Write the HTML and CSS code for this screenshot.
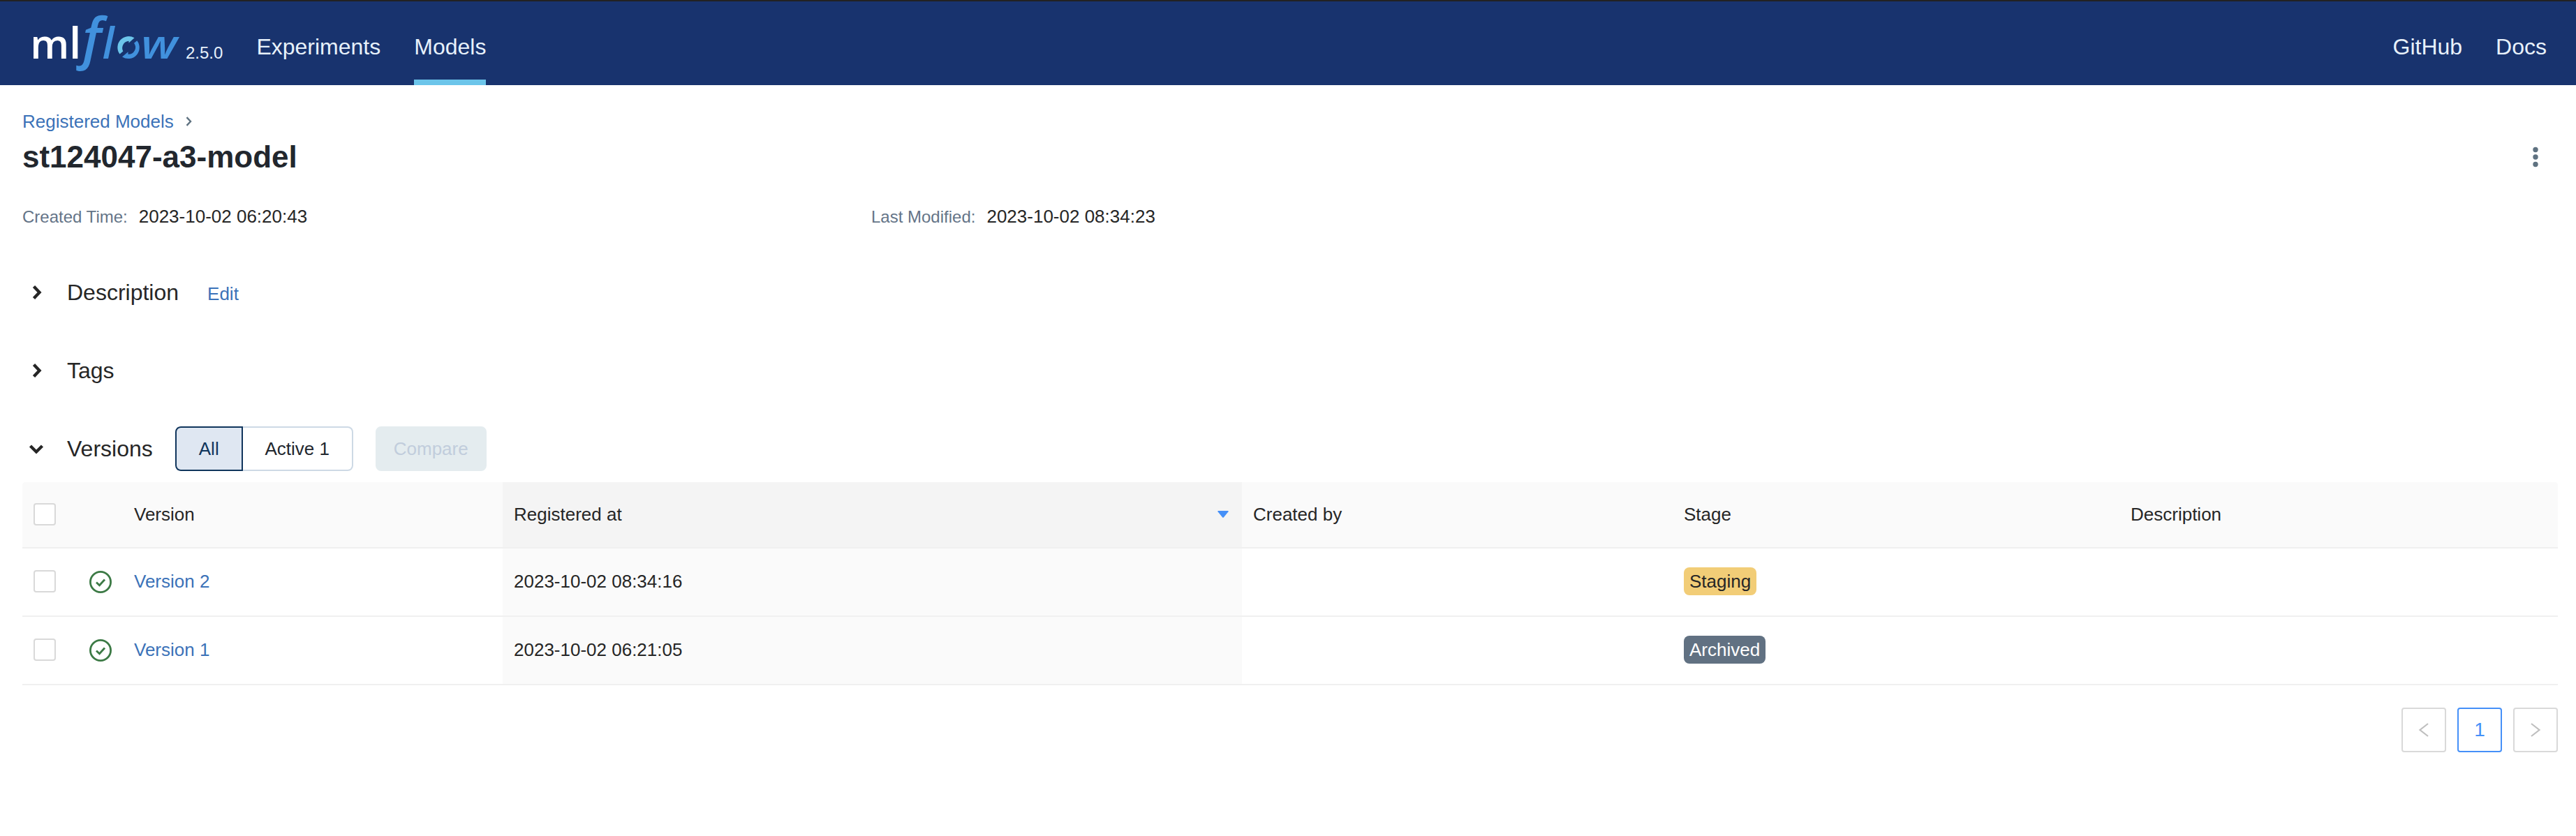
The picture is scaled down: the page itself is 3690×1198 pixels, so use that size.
FILE: index.html
```html
<!DOCTYPE html>
<html lang="en">
<head>
<meta charset="utf-8">
<title>st124047-a3-model - MLflow Model</title>
<link rel="stylesheet" href="styles.css">
</head>
<body>
<header class="header">
  <svg class="logo" width="217" height="90" viewBox="44 16 217 90" role="img" aria-label="mlflow">
    <g font-family="'Open Sans', 'Noto Sans', sans-serif">
      <text class="logo-ml" x="43.300" y="84" font-size="58" font-weight="600" textLength="56" lengthAdjust="spacingAndGlyphs">m</text>
      <text class="logo-ml" x="99" y="84" font-size="62" font-weight="600">l</text>
      <text class="logo-flow" x="118" y="83" font-size="79" font-weight="600" font-style="italic">f</text>
      <text class="logo-flow" x="146.500" y="84" font-size="62" font-weight="600" font-style="italic">l</text>
      <text class="logo-flow" x="202" y="84" font-size="57" font-weight="600" font-style="italic" textLength="52" lengthAdjust="spacingAndGlyphs">w</text>
    </g>
    <path fill="#6cc5ea" d="M171.500 77.500A16 16 0 0 1 192.500 54.200L184.500 61.500V58.800A10 10 0 0 0 176.300 73.500Z"/>
    <path fill="#4191dd" d="M196.300 58.200A16 16 0 0 1 175 81.500L183.500 74.300V77.700A10 10 0 0 0 192 61.700Z"/>
  </svg>
  <span class="release">2.5.0</span>
  <nav class="nav">
    <a class="nav-link">Experiments</a>
    <a class="nav-link nav-active">Models</a>
  </nav>
  <nav class="nav nav-right">
    <a class="nav-link">GitHub</a>
    <a class="nav-link">Docs</a>
  </nav>
</header>
<main class="page">
  <div class="crumbs">
    <a class="link">Registered Models</a>
    <svg width="10" height="14" viewBox="0 0 10 14" fill="none" stroke="#5f7281" stroke-width="2.400"><path d="M1.500 1.200L7 7L1.500 12.800"/></svg>
  </div>
  <div class="title-row">
    <h1 class="title">st124047-a3-model</h1>
    <svg class="more" width="8" height="30" viewBox="0 0 8 30" fill="#5f7281"><circle cx="4" cy="4.500" r="3.700"/><circle cx="4" cy="15" r="3.700"/><circle cx="4" cy="25.500" r="3.700"/></svg>
  </div>
  <div class="meta">
    <div class="meta-item"><span class="meta-label">Created Time:</span><span>2023-10-02 06:20:43</span></div>
    <div class="meta-item"><span class="meta-label">Last Modified:</span><span>2023-10-02 08:34:23</span></div>
  </div>
  <section class="section">
    <svg class="chevron" width="20" height="20" viewBox="0 0 20 20"><path d="M6.500 1.500L14.500 10L6.500 18.500"/></svg>
    <h2 class="section-title">Description</h2>
    <a class="link edit">Edit</a>
  </section>
  <section class="section">
    <svg class="chevron" width="20" height="20" viewBox="0 0 20 20"><path d="M6.500 1.500L14.500 10L6.500 18.500"/></svg>
    <h2 class="section-title">Tags</h2>
  </section>
  <section class="section section-versions">
    <svg class="chevron" width="20" height="20" viewBox="0 0 20 20"><path d="M1.500 6L10 14.500L18.500 6"/></svg>
    <h2 class="section-title">Versions</h2>
    <div class="filter">
      <button class="btn btn-all">All</button><button class="btn btn-active">Active 1</button>
    </div>
    <button class="btn btn-compare" disabled>Compare</button>
  </section>
  <table class="versions">
    <colgroup><col class="c-check"><col class="c-status"><col class="c-version"><col class="c-registered"><col class="c-created"><col class="c-stage"><col></colgroup>
    <thead>
      <tr>
        <th><span class="checkbox"></span></th>
        <th></th>
        <th>Version</th>
        <th class="sorted"><div class="sort-head">Registered at<svg width="16" height="10" viewBox="0 0 16 10"><path fill="#4590f8" d="M1 0H15Q16 .3 15.500 1.200L9 9.300Q8 10.300 7 9.300L.5 1.200Q0 .3 1 0Z"/></svg></div></th>
        <th>Created by</th>
        <th>Stage</th>
        <th>Description</th>
      </tr>
    </thead>
    <tbody>
      <tr>
        <td><span class="checkbox"></span></td>
        <td class="status"><svg width="32" height="32" viewBox="0 0 32 32"><circle cx="16" cy="16" r="14.600"/><path d="M10 16.500L14.500 20.800L22 12.500"/></svg></td>
        <td><a class="link">Version 2</a></td>
        <td class="sorted">2023-10-02 08:34:16</td>
        <td></td>
        <td><span class="tag tag-staging">Staging</span></td>
        <td></td>
      </tr>
      <tr>
        <td><span class="checkbox"></span></td>
        <td class="status"><svg width="32" height="32" viewBox="0 0 32 32"><circle cx="16" cy="16" r="14.600"/><path d="M10 16.500L14.500 20.800L22 12.500"/></svg></td>
        <td><a class="link">Version 1</a></td>
        <td class="sorted">2023-10-02 06:21:05</td>
        <td></td>
        <td><span class="tag tag-archived">Archived</span></td>
        <td></td>
      </tr>
    </tbody>
  </table>
  <div class="pagination">
    <span class="page-box"><svg width="14" height="20" viewBox="0 0 14 20"><path d="M13 1L1.500 10L13 19"/></svg></span>
    <span class="page-box page-current">1</span>
    <span class="page-box"><svg width="14" height="20" viewBox="0 0 14 20"><path d="M1 1L12.500 10L1 19"/></svg></span>
  </div>
</main>
</body>
</html>
```

FILE: styles.css
```css
* { box-sizing: border-box; }
body {
  margin: 0;
  background: #fff;
  color: #262626;
  font: 26px/40px "Liberation Sans", Arial, sans-serif;
}
svg { display: block; flex: none; overflow: visible; }
h1, h2 { margin: 0; }

/* Header */
.header {
  display: flex;
  height: 122px;
  padding: 0 42px 0 44px;
  border-top: 2px solid #222;
  background: #18336e;
  color: #e7f1fb;
}
.logo { margin-top: 14px; }
.logo-ml { fill: #fff; }
.logo-flow { fill: #4191dd; }
.release { margin: 54px 48px 0 5px; font-size: 24px; }
.nav { display: flex; gap: 48px; }
.nav-right { margin-left: auto; }
.nav-link { height: 120px; padding-top: 45px; font-size: 32px; }
.nav-active { border-bottom: 8px solid #6cc5ea; }

/* Page heading */
.page { padding: 32px 26px 0 32px; }
.link { color: #3b72b8; }
.crumbs { display: flex; align-items: center; gap: 17px; height: 40px; }
.title-row {
  display: flex;
  align-items: center;
  justify-content: space-between;
  height: 56px;
  margin-top: 3px;
  padding-right: 28px;
}
.title { color: #22272e; font-size: 44px; font-weight: 700; line-height: 56px; }
.meta {
  display: grid;
  grid-template-columns: repeat(3, 1216px);
  height: 40px;
  margin-top: 37px;
}
.meta-item { display: flex; align-items: baseline; gap: 16px; }
.meta-label { color: #647487; font-size: 24px; }

/* Collapsible sections */
.section {
  display: flex;
  align-items: center;
  height: 64px;
  margin-top: 48px;
  padding-left: 10px;
}
.meta + .section { margin-top: 57px; }
.chevron { margin-right: 34px; fill: none; stroke: #262626; stroke-width: 4.4; }
.section-title { font-size: 32px; font-weight: 400; }
.edit { margin-left: 41px; padding-top: 4px; }
.filter { display: flex; margin-left: 32px; }
.btn {
  height: 64px;
  padding: 0;
  border: 2px solid #cdd9e5;
  border-radius: 8px;
  background: #fff;
  color: #22272e;
  font: inherit;
}
.btn-all {
  width: 97px;
  border-color: #10355c;
  border-radius: 8px 0 0 8px;
  background: #dfe7f2;
  color: #10355c;
}
.btn-active { width: 158px; border-left: 0; border-radius: 0 8px 8px 0; }
.btn-compare {
  width: 159px;
  margin-left: 32px;
  border-color: #e4ecef;
  background: #e4ecef;
  color: #c1cddc;
}

/* Versions table */
.versions {
  width: 3632px;
  margin-top: 16px;
  border-spacing: 0;
  table-layout: fixed;
}
.c-check { width: 80px; }
.c-status { width: 64px; }
.c-version { width: 544px; }
.c-registered { width: 1059px; }
.c-created { width: 617px; }
.c-stage { width: 640px; }
.versions th, .versions td {
  padding: 0 16px 2px;
  border-bottom: 2px solid #f0f0f0;
  font-weight: 400;
  text-align: left;
  vertical-align: middle;
}
.versions th { height: 95px; background: #fafafa; }
.versions th:first-child { border-top-left-radius: 4px; }
.versions th:last-child { border-top-right-radius: 4px; }
.versions td { height: 98px; }
.versions td.status { padding-bottom: 0; }
.versions th.sorted { background: #f4f4f4; }
.versions td.sorted { background: #fafafa; }
.sort-head { display: flex; align-items: center; justify-content: space-between; padding-right: 3px; }
.checkbox {
  display: block;
  width: 32px;
  height: 32px;
  border: 2px solid #d9d9d9;
  border-radius: 4px;
  background: #fff;
}
.status svg { fill: none; stroke: #3c7a45; stroke-width: 2.8; }
.tag {
  display: block;
  width: max-content;
  padding: 0 8px;
  border-radius: 8px;
}
.tag-staging { background: #f2cd77; }
.tag-archived { background: #617182; color: #fff; }

/* Pagination */
.pagination { display: flex; justify-content: flex-end; gap: 16px; margin-top: 32px; }
.page-box {
  display: flex;
  align-items: center;
  justify-content: center;
  width: 64px;
  height: 64px;
  border: 2px solid #d9d9d9;
  border-radius: 4px;
  font-size: 28px;
}
.page-box svg { fill: none; stroke: #bfbfbf; stroke-width: 2.2; }
.page-current { border-color: #4590f8; color: #4590f8; }
```
